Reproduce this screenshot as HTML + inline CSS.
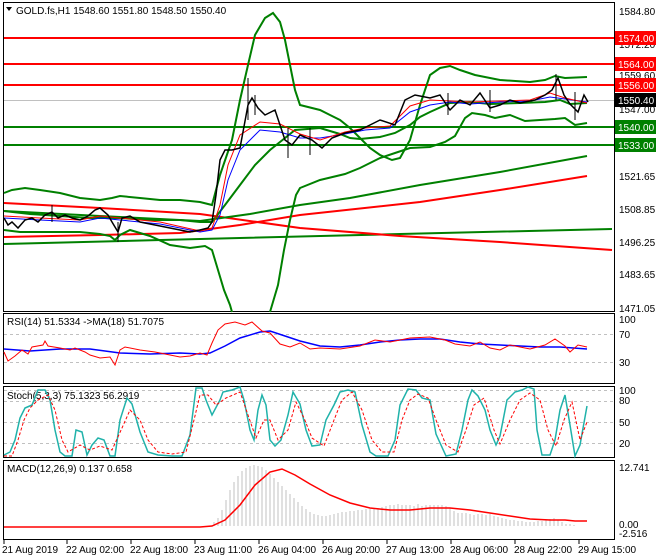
<!DOCTYPE html>
<html><head><meta charset="utf-8"><style>
body{margin:0;background:#fff;}
svg{display:block;font-family:"Liberation Sans",sans-serif;font-size:10px;}
</style></head><body>
<svg width="660" height="560" viewBox="0 0 660 560" xmlns="http://www.w3.org/2000/svg">
<rect width="660" height="560" fill="#fff"/>
<g fill="none" stroke="#000" stroke-width="1">
<rect x="3.5" y="2.5" width="611" height="309"/>
<rect x="3.5" y="313.5" width="611" height="70"/>
<rect x="3.5" y="386.5" width="611" height="71"/>
<rect x="3.5" y="460.5" width="611" height="79"/>
</g>
<line x1="4" y1="100.5" x2="614" y2="100.5" stroke="#c0c0c0"/>
<!-- long MAs -->
<polyline fill="none" stroke="#008000" stroke-width="2" points="4,244 200,239 400,234 612,229"/>
<polyline fill="none" stroke="#ff0000" stroke-width="2" points="4,203 100,208 200,214 300,228 400,236 500,242 612,250"/>
<polyline fill="none" stroke="#008000" stroke-width="2" points="4,211 100,216 200,221 250,214 300,205 350,198 420,185 500,172 587,156"/>
<polyline fill="none" stroke="#ff0000" stroke-width="2" points="4,237 100,235 180,233 240,225 300,215 420,202 500,190 587,176"/>
<g stroke-width="2">
<line x1="4" y1="38" x2="614" y2="38" stroke="#ff0000"/>
<line x1="4" y1="64" x2="614" y2="64" stroke="#ff0000"/>
<line x1="4" y1="85" x2="614" y2="85" stroke="#ff0000"/>
<line x1="4" y1="127" x2="614" y2="127" stroke="#008000"/>
<line x1="4" y1="145" x2="614" y2="145" stroke="#008000"/>
</g>
<!-- bollinger -->
<g fill="none" stroke="#008000" stroke-width="2">
<polyline points="4,193 12,190 25,188 40,190 60,193 80,198 100,200 112,198 120,196 140,198 160,200 180,200 200,202 212,205 220,175 232,140 240,100 248,65 255,35 265,18 273,13 280,22 285,40 290,65 295,90 300,105 320,110 330,115 340,120 350,128 360,138 370,148 380,155 392,160 400,158 410,140 420,105 430,75 440,68 450,66 460,70 475,75 500,80 530,82 545,80 555,76 565,78 587,77"/>
<polyline points="4,230 20,232 40,232 60,232 80,232 100,234 110,236 115,240 120,235 130,230 150,236 170,245 190,248 205,246 212,250 218,270 224,290 230,305 232,312"/>
<polyline points="270,312 278,285 284,250 290,220 296,195 300,188 320,180 345,174 360,168 380,158 395,153 410,148 430,147 445,142 455,136 465,118 472,113 485,115 495,118 510,115 525,121 540,120 555,119 565,118 575,125 587,123"/>
<polyline points="4,211 30,214 60,216 90,218 120,218 150,220 180,220 200,222 212,222 225,205 240,185 255,165 270,150 285,138 295,130 320,128 340,134 350,138 360,139 380,137 395,133 410,125 420,117 430,112 450,103 470,102 490,104 520,103 545,102 560,100 570,104 587,103"/>
</g>
<polyline fill="none" stroke="#0000ff" stroke-width="1" points="4,218 40,220 80,222 100,218 120,220 160,224 200,232 212,230 220,215 228,180 240,150 260,130 280,132 300,138 320,138 345,134 365,130 390,128 410,112 430,105 450,102 470,104 500,102 530,101 550,97 565,99 587,102"/>
<polyline fill="none" stroke="#ff0000" stroke-width="1" points="4,216 40,218 80,220 100,216 120,218 160,222 200,231 212,228 220,205 228,165 240,135 260,122 280,124 300,134 320,140 345,132 365,128 390,126 410,106 430,100 450,101 470,102 500,101 530,100 550,93 565,98 587,103"/>
<!-- price -->
<polyline fill="none" stroke="#000" stroke-width="1.5" points="4,218 8,225 12,222 18,228 25,220 32,218 38,222 45,215 52,212 58,218 65,215 72,218 80,220 88,216 95,210 100,208 108,215 112,222 118,232 122,218 130,216 140,222 150,224 160,226 170,228 180,230 190,232 200,230 208,228 212,222 216,195 220,160 225,150 232,150 240,148 248,105 252,98 258,108 265,115 275,110 285,140 292,145 300,135 312,140 322,148 332,138 345,133 360,130 370,125 380,120 395,125 405,100 415,95 430,98 440,95 450,110 460,100 470,105 480,93 490,108 500,105 510,100 520,103 535,100 545,95 552,90 558,78 564,95 570,104 578,112 584,95 588,102"/>
<g stroke="#000" stroke-width="1">
<line x1="248" y1="78" x2="248" y2="120"/><line x1="255" y1="95" x2="255" y2="115"/>
<line x1="288" y1="128" x2="288" y2="158"/><line x1="310" y1="128" x2="310" y2="155"/>
<line x1="556" y1="74" x2="556" y2="100"/><line x1="575" y1="92" x2="575" y2="120"/>
<line x1="490" y1="90" x2="490" y2="112"/><line x1="448" y1="93" x2="448" y2="115"/>
<line x1="118" y1="222" x2="118" y2="242"/><line x1="52" y1="205" x2="52" y2="222"/>
</g>
<g fill="#000">
<text x="619" y="15">1584.80</text>
<text x="619" y="48">1572.20</text>
<text x="619" y="79">1559.60</text>
<text x="619" y="113">1547.00</text>
<text x="619" y="180">1521.65</text>
<text x="619" y="213">1508.85</text>
<text x="619" y="246">1496.25</text>
<text x="619" y="278">1483.65</text>
<text x="619" y="312">1471.05</text>
</g>
<g>
<rect x="615" y="31" width="41" height="14" fill="#ff0000"/><text x="618" y="42" fill="#fff">1574.00</text>
<rect x="615" y="57" width="41" height="14" fill="#ff0000"/><text x="618" y="68" fill="#fff">1564.00</text>
<rect x="615" y="78" width="41" height="14" fill="#ff0000"/><text x="618" y="89" fill="#fff">1556.00</text>
<rect x="615" y="93" width="41" height="14" fill="#000"/><text x="618" y="104" fill="#fff">1550.40</text>
<rect x="615" y="120" width="41" height="14" fill="#008000"/><text x="618" y="131" fill="#fff">1540.00</text>
<rect x="615" y="138" width="41" height="14" fill="#008000"/><text x="618" y="149" fill="#fff">1533.00</text>
</g>
<path d="M6,7 L12,7 L9,11 Z" fill="#000"/>
<text x="16" y="14" fill="#000">GOLD.fs,H1  1548.60 1551.80 1548.50 1550.40</text>

<!-- RSI -->
<g stroke="#c0c0c0" stroke-dasharray="3,3"><line x1="4" y1="334.5" x2="614" y2="334.5"/><line x1="4" y1="362.5" x2="614" y2="362.5"/></g>
<text x="7" y="325" fill="#000">RSI(14) 51.5334  -&gt;MA(18) 51.7075</text>
<polyline fill="none" stroke="#0000ff" stroke-width="1.5" points="4,349 30,351 60,349 90,349 120,353 150,354 180,353 200,354 210,353 225,346 240,338 260,332 270,331 285,336 300,341 320,346 340,347 360,345 380,342 400,340 420,339 440,339 460,342 480,344 500,345 520,346 540,347 560,347 587,349"/>
<polyline fill="none" stroke="#ff0000" stroke-width="1" points="4,352 8,361 15,356 22,350 28,354 32,347 43,345 45,341 48,346 60,348 70,350 75,348 85,352 90,355 100,358 110,357 115,365 120,350 125,347 140,350 155,352 165,354 180,357 190,356 200,353 207,355 212,343 218,330 225,324 235,322 245,325 252,322 262,331 270,333 280,344 290,347 300,343 310,349 320,348 340,349 360,346 375,340 390,342 410,338 430,337 445,340 455,344 470,346 480,342 490,348 500,350 510,345 520,347 530,349 545,345 555,339 565,346 570,352 578,345 587,347"/>
<g fill="#000"><text x="619" y="323">100</text><text x="619" y="338">70</text><text x="619" y="366">30</text></g>

<!-- Stoch -->
<g stroke="#c0c0c0" stroke-dasharray="3,3"><line x1="4" y1="401.5" x2="614" y2="401.5"/><line x1="4" y1="422.5" x2="614" y2="422.5"/><line x1="4" y1="443.5" x2="614" y2="443.5"/><line x1="4" y1="390.5" x2="614" y2="390.5"/></g>
<text x="7" y="399" fill="#000">Stoch(5,3,3) 75.1323 56.2919</text>
<polyline fill="none" stroke="#20b2aa" stroke-width="1.5" points="4,455 10,452 15,440 20,418 25,408 32,405 38,390 45,390 50,400 55,430 60,452 65,456 72,456 76,430 82,432 87,455 92,445 98,438 104,440 110,456 115,456 120,420 127,398 132,404 140,432 148,452 158,455 172,456 182,456 190,435 196,388 202,388 206,400 212,415 220,400 223,392 232,390 240,387 244,400 250,430 254,440 258,410 262,395 266,405 270,440 275,446 281,440 288,415 293,392 300,404 306,430 312,446 320,445 326,420 334,405 340,392 348,390 355,392 362,425 370,452 376,456 388,456 395,440 400,405 408,389 416,390 422,398 430,400 436,434 446,456 456,454 462,430 468,400 472,390 478,396 485,410 490,430 496,445 500,436 507,400 515,392 522,390 528,387 534,389 537,430 542,455 550,455 555,440 560,410 565,395 570,425 575,456 580,445 587,406"/>
<polyline fill="none" stroke="#ff0000" stroke-width="1" stroke-dasharray="3,2" points="4,456 12,456 18,440 24,420 30,408 38,400 48,395 55,410 62,440 68,452 80,445 90,450 100,446 112,450 122,428 130,410 140,420 148,440 158,452 172,454 186,452 194,420 200,395 208,395 216,405 226,398 240,392 248,415 256,438 264,420 270,420 278,440 288,430 296,402 304,418 312,438 324,446 334,420 342,400 352,392 362,410 372,440 382,452 394,452 402,420 410,400 418,394 428,398 436,420 446,445 458,452 466,430 474,405 484,398 494,430 500,444 510,420 520,400 530,393 540,400 548,430 556,446 564,420 572,402 580,440 587,422"/>
<g fill="#000" font-size="10"><text x="619" y="394">100</text><text x="619" y="404">80</text><text x="619" y="426">50</text><text x="619" y="447">20</text></g>

<!-- MACD -->
<text x="7" y="472" fill="#000">MACD(12,26,9) 0.137 0.658</text>
<g stroke="#c0c0c0" stroke-width="1">
<line x1="214" y1="526" x2="214" y2="522"/><line x1="218" y1="526" x2="218" y2="518"/><line x1="222" y1="526" x2="222" y2="510"/><line x1="226" y1="526" x2="226" y2="500"/><line x1="230" y1="526" x2="230" y2="490"/><line x1="234" y1="526" x2="234" y2="482"/><line x1="238" y1="526" x2="238" y2="476"/><line x1="242" y1="526" x2="242" y2="471"/><line x1="246" y1="526" x2="246" y2="468"/><line x1="250" y1="526" x2="250" y2="466"/><line x1="254" y1="526" x2="254" y2="465"/><line x1="258" y1="526" x2="258" y2="466"/><line x1="262" y1="526" x2="262" y2="467"/><line x1="266" y1="526" x2="266" y2="470"/><line x1="270" y1="526" x2="270" y2="474"/><line x1="274" y1="526" x2="274" y2="478"/><line x1="278" y1="526" x2="278" y2="482"/><line x1="282" y1="526" x2="282" y2="486"/><line x1="286" y1="526" x2="286" y2="490"/><line x1="290" y1="526" x2="290" y2="494"/><line x1="294" y1="526" x2="294" y2="498"/><line x1="298" y1="526" x2="298" y2="502"/><line x1="302" y1="526" x2="302" y2="506"/><line x1="306" y1="526" x2="306" y2="509"/><line x1="310" y1="526" x2="310" y2="512"/><line x1="314" y1="526" x2="314" y2="514"/><line x1="318" y1="526" x2="318" y2="515"/><line x1="322" y1="526" x2="322" y2="516"/><line x1="326" y1="526" x2="326" y2="516"/><line x1="330" y1="526" x2="330" y2="515"/><line x1="334" y1="526" x2="334" y2="514"/><line x1="338" y1="526" x2="338" y2="513"/><line x1="342" y1="526" x2="342" y2="512"/><line x1="346" y1="526" x2="346" y2="512"/><line x1="350" y1="526" x2="350" y2="511"/><line x1="354" y1="526" x2="354" y2="511"/><line x1="358" y1="526" x2="358" y2="510"/><line x1="362" y1="526" x2="362" y2="510"/><line x1="366" y1="526" x2="366" y2="509"/><line x1="370" y1="526" x2="370" y2="509"/><line x1="374" y1="526" x2="374" y2="508"/><line x1="378" y1="526" x2="378" y2="508"/><line x1="382" y1="526" x2="382" y2="507"/><line x1="386" y1="526" x2="386" y2="506"/><line x1="390" y1="526" x2="390" y2="505"/><line x1="394" y1="526" x2="394" y2="505"/><line x1="398" y1="526" x2="398" y2="504"/><line x1="402" y1="526" x2="402" y2="505"/><line x1="406" y1="526" x2="406" y2="505"/><line x1="410" y1="526" x2="410" y2="505"/><line x1="414" y1="526" x2="414" y2="506"/><line x1="418" y1="526" x2="418" y2="504"/><line x1="422" y1="526" x2="422" y2="506"/><line x1="426" y1="526" x2="426" y2="505"/><line x1="430" y1="526" x2="430" y2="505"/><line x1="434" y1="526" x2="434" y2="505"/><line x1="438" y1="526" x2="438" y2="505"/><line x1="442" y1="526" x2="442" y2="505"/><line x1="446" y1="526" x2="446" y2="506"/><line x1="450" y1="526" x2="450" y2="508"/><line x1="454" y1="526" x2="454" y2="511"/><line x1="458" y1="526" x2="458" y2="513"/><line x1="462" y1="526" x2="462" y2="513"/><line x1="466" y1="526" x2="466" y2="513"/><line x1="470" y1="526" x2="470" y2="514"/><line x1="474" y1="526" x2="474" y2="515"/><line x1="478" y1="526" x2="478" y2="514"/><line x1="482" y1="526" x2="482" y2="514"/><line x1="486" y1="526" x2="486" y2="515"/><line x1="490" y1="526" x2="490" y2="514"/><line x1="494" y1="526" x2="494" y2="516"/><line x1="498" y1="526" x2="498" y2="517"/><line x1="502" y1="526" x2="502" y2="518"/><line x1="506" y1="526" x2="506" y2="519"/><line x1="510" y1="526" x2="510" y2="520"/><line x1="514" y1="526" x2="514" y2="520"/><line x1="518" y1="526" x2="518" y2="521"/><line x1="522" y1="526" x2="522" y2="521"/><line x1="526" y1="526" x2="526" y2="522"/><line x1="530" y1="526" x2="530" y2="522"/><line x1="534" y1="526" x2="534" y2="522"/><line x1="538" y1="526" x2="538" y2="521"/><line x1="542" y1="526" x2="542" y2="521"/><line x1="546" y1="526" x2="546" y2="520"/><line x1="550" y1="526" x2="550" y2="519"/><line x1="554" y1="526" x2="554" y2="518"/><line x1="558" y1="526" x2="558" y2="520"/><line x1="562" y1="526" x2="562" y2="522"/><line x1="566" y1="526" x2="566" y2="524"/><line x1="570" y1="526" x2="570" y2="524"/><line x1="574" y1="526" x2="574" y2="525"/>
</g>
<polyline fill="none" stroke="#ff0000" stroke-width="1.5" points="4,527 200,527 212,526 225,520 240,505 255,485 270,472 282,469 295,475 310,484 330,495 350,503 370,508 390,510 410,510 430,508 450,508 470,510 490,513 510,516 530,519 550,520 565,520 575,521 587,521"/>
<g fill="#000"><text x="619" y="471">12.741</text><text x="619" y="528">0.00</text><text x="619" y="537">-2.516</text></g>

<g stroke="#000"><line x1="4" y1="540" x2="4" y2="544"/><line x1="67" y1="540" x2="67" y2="544"/><line x1="131" y1="540" x2="131" y2="544"/><line x1="195" y1="540" x2="195" y2="544"/><line x1="259" y1="540" x2="259" y2="544"/><line x1="323" y1="540" x2="323" y2="544"/><line x1="387" y1="540" x2="387" y2="544"/><line x1="451" y1="540" x2="451" y2="544"/><line x1="515" y1="540" x2="515" y2="544"/><line x1="579" y1="540" x2="579" y2="544"/></g>
<g fill="#000">
<text x="2" y="553" textLength="56">21 Aug 2019</text>
<text x="66" y="553" textLength="58">22 Aug 02:00</text>
<text x="130" y="553" textLength="58">22 Aug 18:00</text>
<text x="194" y="553" textLength="58">23 Aug 11:00</text>
<text x="258" y="553" textLength="58">26 Aug 04:00</text>
<text x="322" y="553" textLength="58">26 Aug 20:00</text>
<text x="386" y="553" textLength="58">27 Aug 13:00</text>
<text x="450" y="553" textLength="58">28 Aug 06:00</text>
<text x="514" y="553" textLength="58">28 Aug 22:00</text>
<text x="578" y="553" textLength="58">29 Aug 15:00</text>
</g>
</svg>
</body></html>
